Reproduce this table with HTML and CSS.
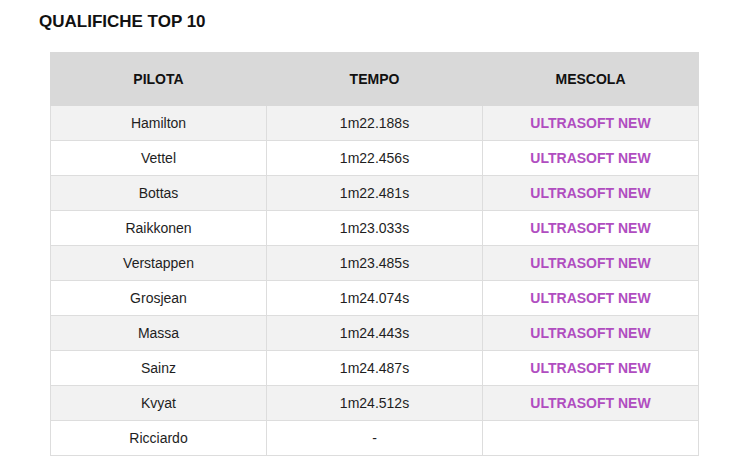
FILE: index.html
```html
<!DOCTYPE html>
<html lang="it">
<head>
<meta charset="utf-8">
<title>Qualifiche Top 10</title>
<link rel="stylesheet" href="styles.css">
</head>
<body>
<div class="page">
  <h1 class="title">QUALIFICHE TOP 10</h1>
  <table class="results">
    <thead>
      <tr><th>PILOTA</th><th>TEMPO</th><th>MESCOLA</th></tr>
    </thead>
    <tbody>
      <tr><td>Hamilton</td><td>1m22.188s</td><td class="tyre">ULTRASOFT NEW</td></tr>
      <tr><td>Vettel</td><td>1m22.456s</td><td class="tyre">ULTRASOFT NEW</td></tr>
      <tr><td>Bottas</td><td>1m22.481s</td><td class="tyre">ULTRASOFT NEW</td></tr>
      <tr><td>Raikkonen</td><td>1m23.033s</td><td class="tyre">ULTRASOFT NEW</td></tr>
      <tr><td>Verstappen</td><td>1m23.485s</td><td class="tyre">ULTRASOFT NEW</td></tr>
      <tr><td>Grosjean</td><td>1m24.074s</td><td class="tyre">ULTRASOFT NEW</td></tr>
      <tr><td>Massa</td><td>1m24.443s</td><td class="tyre">ULTRASOFT NEW</td></tr>
      <tr><td>Sainz</td><td>1m24.487s</td><td class="tyre">ULTRASOFT NEW</td></tr>
      <tr><td>Kvyat</td><td>1m24.512s</td><td class="tyre">ULTRASOFT NEW</td></tr>
      <tr><td>Ricciardo</td><td>-</td><td class="tyre"></td></tr>
    </tbody>
  </table>
</div>
</body>
</html>
```

FILE: styles.css
```css
html, body {
  margin: 0;
  padding: 0;
  background: #ffffff;
}

body {
  font-family: "Liberation Sans", Arial, sans-serif;
  color: #111111;
}

.page {
  padding: 12px 0 0 39px;
}

.title {
  margin: 0;
  font-size: 17px;
  line-height: 20px;
  font-weight: bold;
  color: #111111;
}

.results {
  margin: 20px 0 0 11px;
  width: 649px;
  border-collapse: collapse;
  table-layout: fixed;
}

.results th {
  height: 53px;
  padding: 0;
  background: #d9d9d9;
  font-size: 14px;
  font-weight: bold;
  color: #111111;
  text-align: center;
  vertical-align: middle;
  border: 1px solid #d9d9d9;
  box-sizing: border-box;
}

.results td {
  height: 34px;
  padding: 0;
  font-size: 14px;
  color: #1e1e1e;
  text-align: center;
  vertical-align: middle;
  border: 1px solid #dddddd;
}

.results tbody tr:nth-child(odd) td {
  background: #f2f2f2;
}

.results tbody tr:nth-child(even) td {
  background: #ffffff;
}

.results td.tyre {
  font-size: 14px;
  font-weight: bold;
  color: #b04dc0;
}
```
